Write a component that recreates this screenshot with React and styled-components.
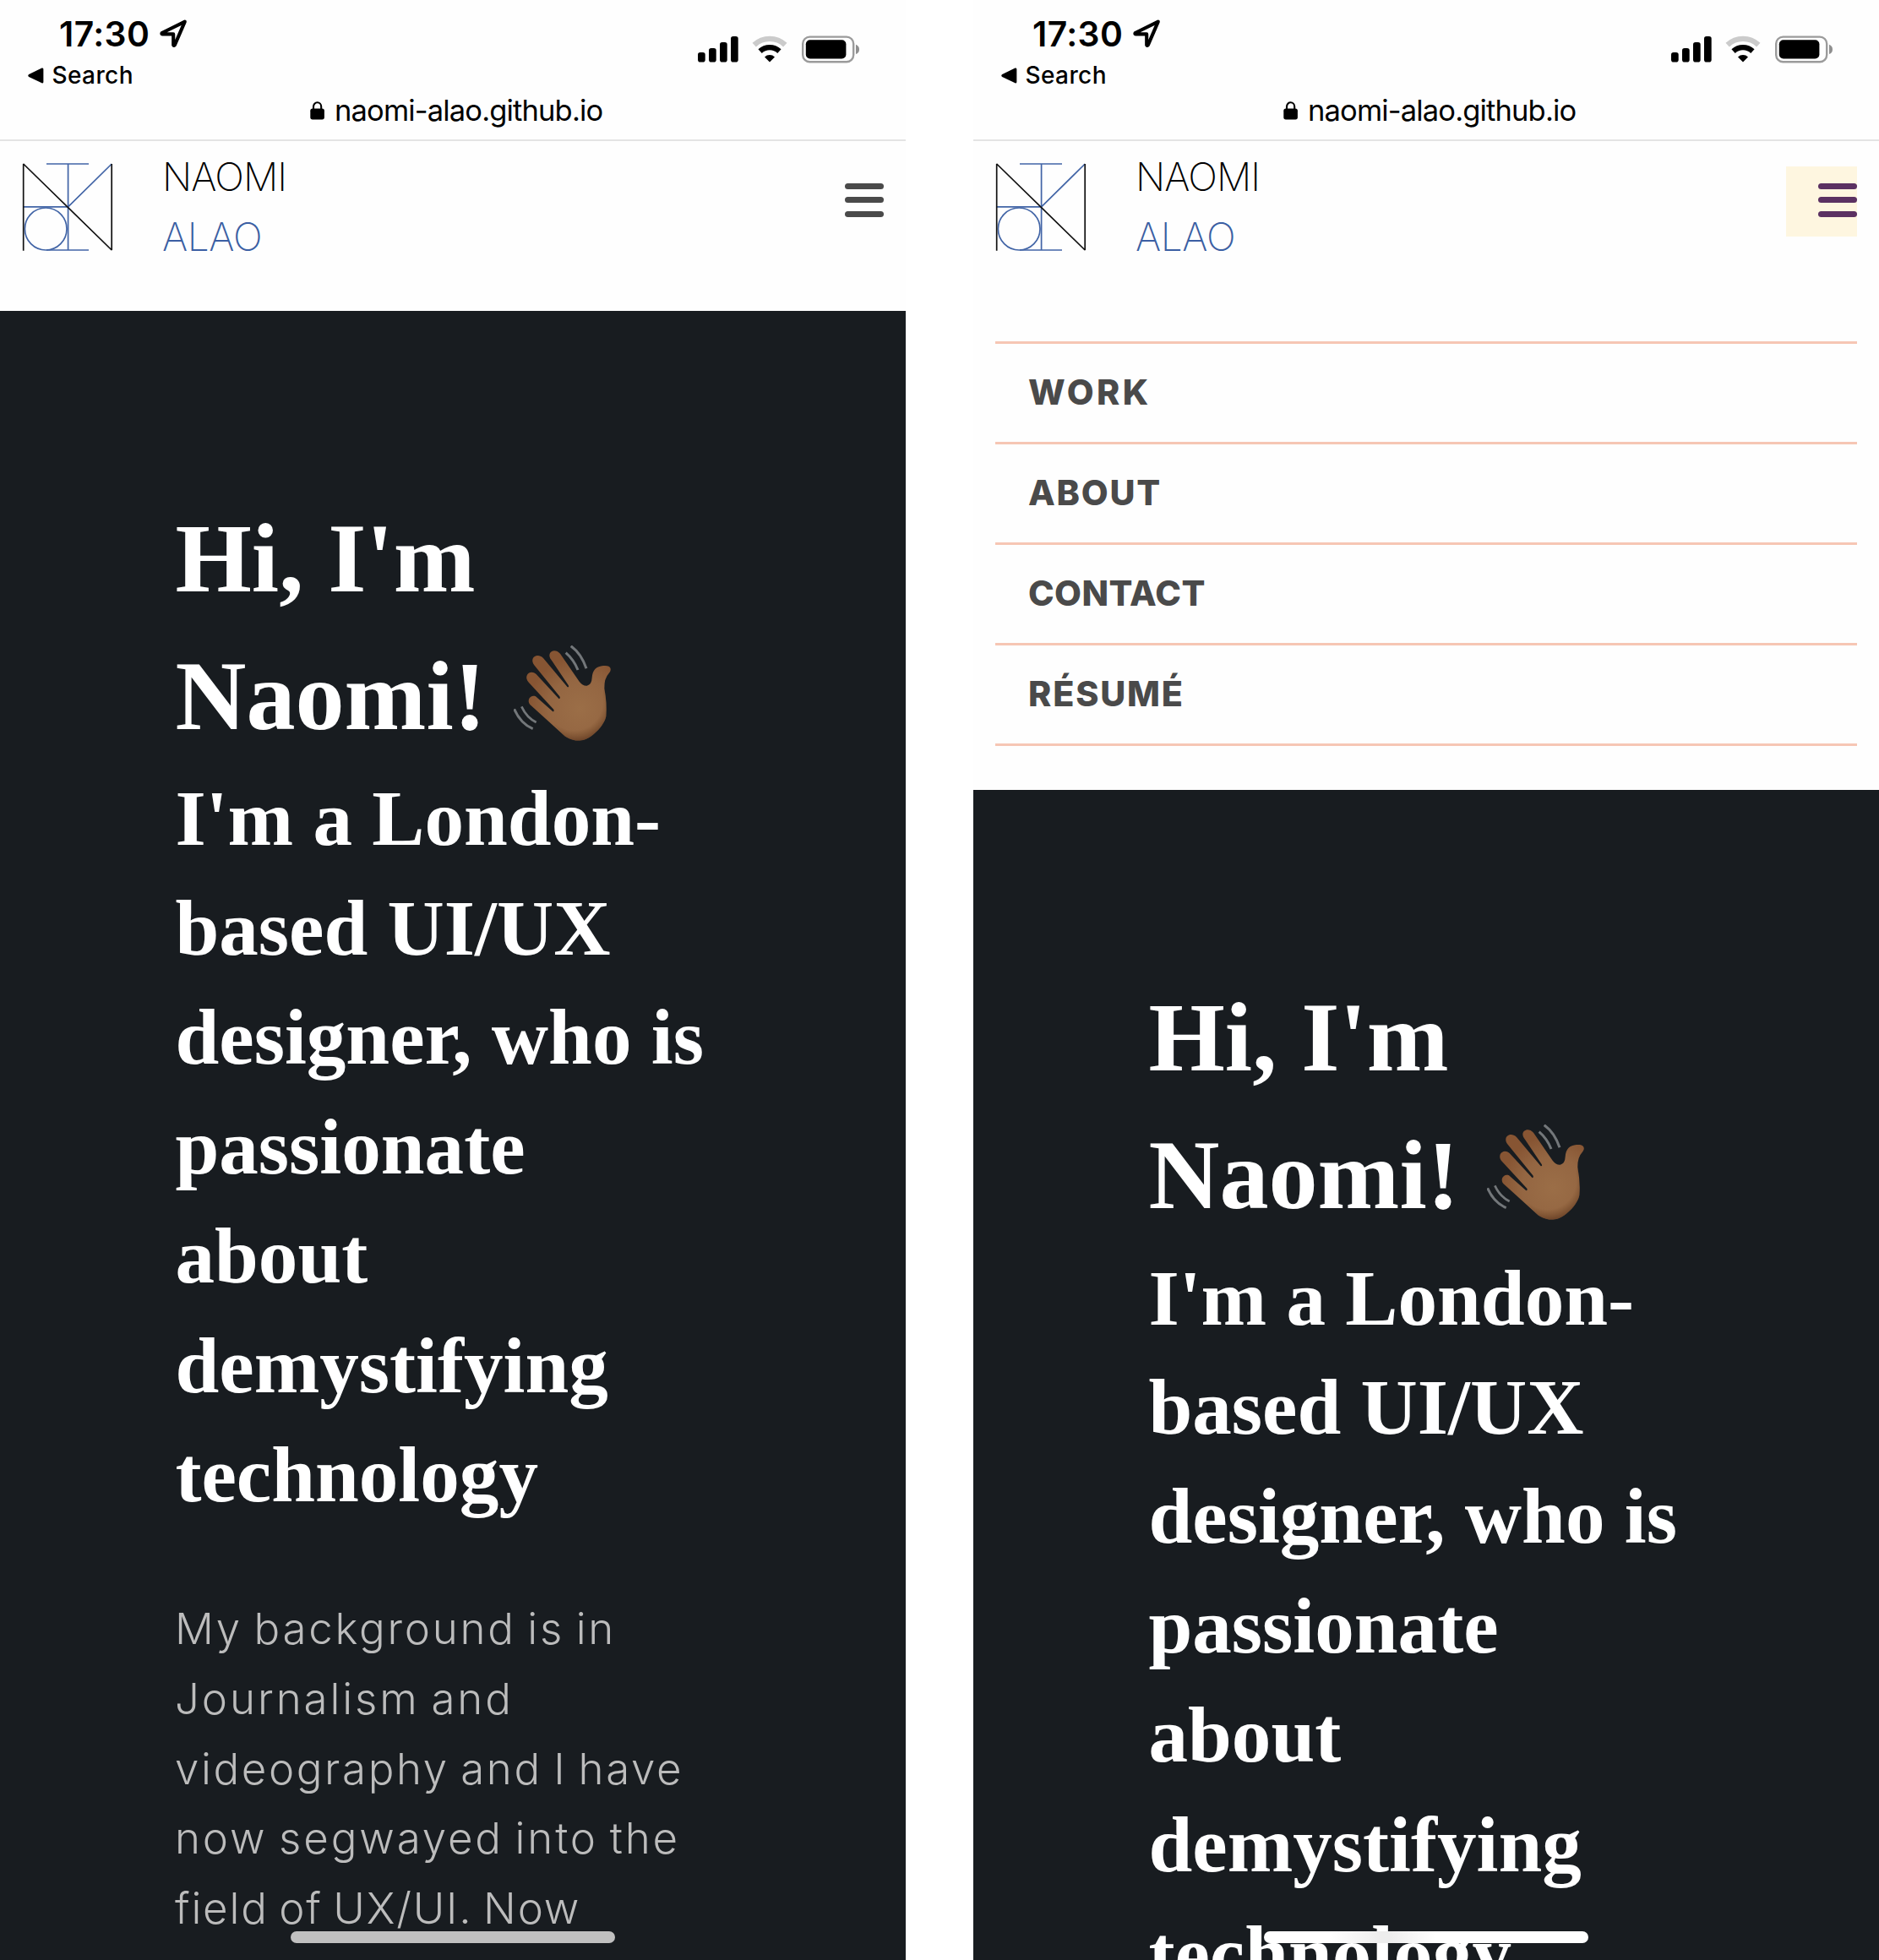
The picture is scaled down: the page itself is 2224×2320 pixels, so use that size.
import React from "react";
import styled, { createGlobalStyle } from "styled-components";

const GlobalStyle = createGlobalStyle`
  * { box-sizing: border-box; }
  body { margin: 0; background: #fff; }
  h1, h2, p, ul { margin: 0; padding: 0; }
  svg { display: block; flex: none; }
`;

const SANS = '"Inter", "Liberation Sans", sans-serif';
const SERIF = '"Liberation Serif", "Times New Roman", serif';

const Screens = styled.main`
  display: grid;
  grid-template-columns: 1072px 1072px;
  column-gap: 80px;
  height: 2320px;
  overflow: hidden;
`;

const Phone = styled.section`
  position: relative;
  display: flex;
  flex-direction: column;
  height: 2320px;
  overflow: hidden;
  background: #fefefe;
`;

const BrowserTop = styled.div`
  height: 167px;
  flex: none;
  border-bottom: 2px solid #e4e4e4;
  font-family: ${SANS};
  color: #000;
`;

const StatusBar = styled.div`
  display: flex;
  justify-content: space-between;
  height: 110px;
  padding: 16px 54px 0 33px;
`;

const TimeRow = styled.div`
  display: flex;
  align-items: center;
  height: 48px;
  gap: 14px;
  padding-left: 37px;
`;

const Time = styled.span`
  width: 105px;
  font-size: 40.8px;
  line-height: 48px;
  font-weight: 600;
  letter-spacing: 0.4px;
  white-space: nowrap;
`;

const BackLink = styled.div`
  display: flex;
  align-items: center;
  height: 34px;
  margin-top: 8px;
  gap: 9.5px;
  font-size: 28px;
  line-height: 34px;
  font-weight: 500;
  letter-spacing: 0.4px;
`;

const StatusIcons = styled.div`
  display: flex;
  gap: 16px;
  padding-top: 26px;
`;

const AddressBar = styled.div`
  display: flex;
  align-items: center;
  justify-content: flex-start;
  gap: 11px;
  height: 42px;
  padding-left: 367px;
  font-size: 34.5px;
  line-height: 42px;
  letter-spacing: -0.85px;
  white-space: nowrap;
`;

const SiteHeader = styled.header`
  display: flex;
  align-items: flex-start;
  flex: none;
  height: 200.6px;
  padding: 7px 26px 0;
`;

const Brand = styled.div`
  display: flex;
  flex-direction: column;
  padding-left: 58px;
  flex: 1;
`;

const BrandWord = styled.span`
  font-family: ${SANS};
  font-weight: 200;
  font-size: 46px;
  line-height: 70.7px;
  color: ${(p) => p.$color};
  letter-spacing: ${(p) => p.$spacing}px;
`;

const LogoBox = styled.div`
  padding-top: 18px;
`;

const MenuButton = styled.button`
  display: flex;
  flex-direction: column;
  align-items: flex-end;
  gap: 9.3px;
  width: 84px;
  height: 83px;
  margin: 23px 0 0;
  padding: 20px 0 0;
  border: 0;
  background: ${(p) => (p.$open ? "#fef6e0" : "transparent")};
  color: ${(p) => (p.$open ? "#5b3162" : "#4a4a4a")};
`;

const MenuBar = styled.span`
  width: 46px;
  height: 7px;
  border-radius: 3.5px;
  background: currentColor;
`;

const Nav = styled.ul`
  flex: none;
  height: 567.2px;
  padding: 36.4px 26px 0;
  list-style: none;
`;

const NavItem = styled.li`
  height: 119px;
  border-top: 3px solid #f6c6b4;
  padding-left: 39px;
  font-family: ${SANS};
  font-weight: 800;
  font-size: 41.3px;
  line-height: 114.6px;
  color: #4a4a4a;
  letter-spacing: ${(p) => p.$spacing}px;
  &:last-child {
    height: 122px;
    border-bottom: 3px solid #f6c6b4;
  }
`;

const Hero = styled.article`
  flex: 1 0 auto;
  padding: 211px 0 0 207.5px;
  background: #181c20;
`;

const Line = styled.span`
  display: block;
  white-space: nowrap;
  letter-spacing: ${(p) => p.$spacing || 0}px;
`;

const Title = styled.h1`
  font: 700 116.2px/163.3px ${SERIF};
  color: #fff;
`;

const WaveWrap = styled.span`
  display: inline-block;
  margin-left: 32.5px;
  vertical-align: -19px;
  height: 118px;
  line-height: 0;
`;

const Subtitle = styled.h2`
  margin-top: -0.8px;
  font: 700 93.15px/129.45px ${SERIF};
  color: #fff;
`;

const Intro = styled.p`
  margin-top: 76.6px;
  margin-left: -0.5px;
  font: 260 51px/82.75px ${SANS};
  word-spacing: -3.5px;
  color: #bcbcbc;
`;

const HomeIndicator = styled.div`
  position: absolute;
  left: 344px;
  bottom: 20px;
  width: 384px;
  height: 14px;
  border-radius: 7px;
  background: ${(p) => p.$fill};
`;

const LocationIcon = () => (
  <svg width="33" height="34" viewBox="0 0 33 34" fill="none" stroke="#000" strokeWidth="4.1" strokeLinejoin="round">
    <path d="M29.8 2.6 L2.6 16 Q2 17 3 17.4 L16.2 17.4 V30.4 Q16.6 31.6 17.8 30.4 Z" />
  </svg>
);

const BackIcon = () => (
  <svg width="19" height="19" viewBox="0 0 19 19">
    <path d="M16.5 .6 Q18.4 0 18.4 2 V17 Q18.4 19 16.5 18.3 L1.2 11 Q-.7 9.5 1.2 8 Z" />
  </svg>
);

const SignalIcon = () => (
  <svg width="48" height="32" viewBox="0 0 48 32">
    <rect x="0" y="20" width="8.7" height="11.5" rx="2.8" />
    <rect x="13" y="15" width="8.7" height="16.5" rx="2.8" />
    <rect x="26" y="8" width="8.7" height="23.5" rx="2.8" />
    <rect x="39" y="1" width="8.7" height="30.5" rx="2.8" />
  </svg>
);

const WifiIcon = () => (
  <svg width="43" height="32" viewBox="0 0 43 32" fill="none">
    <path d="M2.7 11.1 A26.7 26.7 0 0 1 39.3 11.1" stroke="#cbcbcb" strokeWidth="6.4" />
    <path d="M9.6 18.6 A16.6 16.6 0 0 1 32.4 18.6" stroke="#000" strokeWidth="6.3" />
    <path d="M21 31.6 L15 25.5 A8.6 8.6 0 0 1 27 25.5 Z" fill="#000" />
  </svg>
);

const BatteryIcon = () => (
  <svg width="69" height="34" viewBox="0 0 69 34">
    <rect x="1.2" y="1.6" width="60" height="29.6" rx="8.2" fill="none" stroke="#9b9b9b" strokeWidth="2.4" />
    <rect x="4.8" y="5.2" width="47.6" height="22.2" rx="5" />
    <path d="M64 10.8 Q68 12.3 68 16.4 Q68 20.5 64 22 Z" fill="#8f8f8f" />
  </svg>
);

const LockIcon = () => (
  <svg width="18" height="22" viewBox="0 0 18 22">
    <rect x="0.3" y="8.6" width="16.6" height="12.8" rx="2.6" />
    <path d="M4 10 V6.2 A4.6 4.9 0 0 1 13.2 6.2 V10" fill="none" stroke="#000" strokeWidth="2.1" />
  </svg>
);

const Logo = () => (
  <svg width="108" height="108" viewBox="0 0 108 108" fill="none" strokeWidth="1.7">
    <g stroke="#4164a6">
      <path d="M29 2 H79 M54.6 2 V104 M29 104 H79 M1.7 52.8 H54.6 L106.2 2" />
      <ellipse cx="28.2" cy="79" rx="24.8" ry="25" />
    </g>
    <path d="M1.7 104.7 V2 L106.2 104 V2" stroke="#111" strokeLinejoin="bevel" />
  </svg>
);

const WavingHand = () => (
  <svg width="118" height="118" viewBox="0 0 354 354" fill="none">
    <defs>
      <radialGradient id="skin" gradientUnits="userSpaceOnUse" cx="235" cy="225" r="185">
        <stop offset="0" stopColor="#9b6e47" />
        <stop offset=".6" stopColor="#946642" />
        <stop offset="1" stopColor="#875533" />
      </radialGradient>
      <radialGradient id="palm" gradientUnits="userSpaceOnUse" cx="215" cy="200" r="145">
        <stop offset=".7" stopColor="#69401f" stopOpacity="0" />
        <stop offset="1" stopColor="#55301c" stopOpacity=".75" />
      </radialGradient>
    </defs>
    <path
      fill="url(#skin)"
      d="M58 210 C45 194 60 174 78 181 L139 235 Q145 234 142 227 L54 132 C32 109 58 83 80 102 L161 190 Q167 188 163 181 L74 71 C53 46 82 23 105 45 L191 148 Q198 149 194 141 L135 53 C112 27 144 5 165 29 L233 128 Q245 144 260 143 Q277 140 278 115 C280 86 294 74 318 72 C346 69 350 85 338 99 Q321 117 322 153 Q332 207 328 251 C322 285 275 333 240 337 C214 341 190 330 178 319 Z"
    />
    <path
      fill="url(#palm)"
      d="M178 319 C190 330 214 341 240 337 C275 333 322 285 328 251 Q332 207 322 153 Q308 210 285 260 Q240 300 140 280 Z"
    />
    <g stroke="#73777a" strokeWidth="9">
      <path d="M203 2 Q240 28 258 82" />
      <path d="M185 26 Q213 50 228 87" />
      <path d="M2 226 Q24 277 68 296" />
      <path d="M28 217 Q46 256 80 273" strokeWidth="8" />
    </g>
  </svg>
);

const subtitleLines = [
  "I'm a London-",
  "based UI/UX",
  "designer, who is",
  "passionate",
  "about",
  "demystifying",
  "technology",
];

const introLines = [
  ["My background is in", 2.75],
  ["Journalism and", 2.9],
  ["videography and I have", 2.6],
  ["now segwayed into the", 2.85],
  ["field of UX/UI. Now", 1.8],
];

const navItems = [
  ["WORK", 3.4],
  ["ABOUT", 1.8],
  ["CONTACT", 0.4],
  ["RÉSUMÉ", 1.8],
];

function PhoneScreen({ menuOpen, indicator }) {
  return (
    <Phone>
      <BrowserTop>
        <StatusBar>
          <div>
            <TimeRow>
              <Time>17:30</Time>
              <LocationIcon />
            </TimeRow>
            <BackLink>
              <BackIcon />
              Search
            </BackLink>
          </div>
          <StatusIcons>
            <SignalIcon />
            <WifiIcon />
            <BatteryIcon />
          </StatusIcons>
        </StatusBar>
        <AddressBar>
          <LockIcon />
          naomi-alao.github.io
        </AddressBar>
      </BrowserTop>
      <SiteHeader>
        <LogoBox>
          <Logo />
        </LogoBox>
        <Brand>
          <BrandWord $color="#000" $spacing={-1}>NAOMI</BrandWord>
          <BrandWord $color="#3b5fa3" $spacing={-0.4}>ALAO</BrandWord>
        </Brand>
        <MenuButton $open={menuOpen} aria-label="Menu">
          <MenuBar />
          <MenuBar />
          <MenuBar />
        </MenuButton>
      </SiteHeader>
      {menuOpen && (
        <Nav>
          {navItems.map(([label, spacing]) => (
            <NavItem key={label} $spacing={spacing}>{label}</NavItem>
          ))}
        </Nav>
      )}
      <Hero>
        <Title>
          <Line>Hi, I'm</Line>
          <Line>
            Naomi!
            <WaveWrap>
              <WavingHand />
            </WaveWrap>
          </Line>
        </Title>
        <Subtitle>
          {subtitleLines.map((text) => (
            <Line key={text}>{text}</Line>
          ))}
        </Subtitle>
        {!menuOpen && (
          <Intro>
            {introLines.map(([text, spacing]) => (
              <Line key={text} $spacing={spacing}>{text}</Line>
            ))}
          </Intro>
        )}
      </Hero>
      <HomeIndicator $fill={indicator} />
    </Phone>
  );
}

export default function App() {
  return (
    <>
      <GlobalStyle />
      <Screens>
        <PhoneScreen indicator="#c0c0c0" />
        <PhoneScreen
          menuOpen
          indicator="linear-gradient(90deg, #fff 20%, #ededed 36%, #ededed 39%, #fff 53%)"
        />
      </Screens>
    </>
  );
}
